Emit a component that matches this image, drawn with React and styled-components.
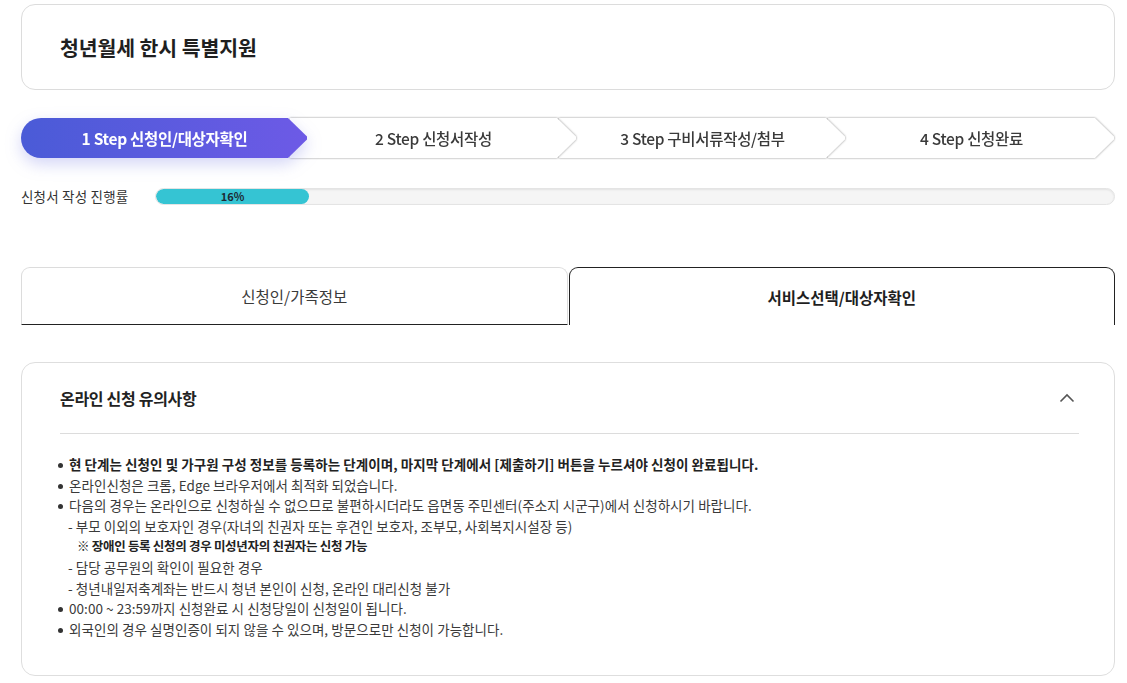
import React from 'react'
import styled, { createGlobalStyle } from 'styled-components'

const GlobalStyle = createGlobalStyle`
  html, body {
    margin: 0;
    padding: 0;
    background: #ffffff;
  }
  body {
    font-family: "Noto Sans CJK KR", "Noto Sans", sans-serif;
    color: #333;
  }
  * { box-sizing: border-box; }
`

const Page = styled.div`
  width: 1127px;
  padding: 4px 12px 0 21px;
`

const TitleCard = styled.div`
  height: 86px;
  border: 1px solid #dcdcdc;
  border-radius: 14px;
  display: flex;
  align-items: center;
  padding-left: 38px;

  h1 {
    margin: 0;
    font-size: 20.5px;
    font-weight: 700;
    color: #1f1f1f;
    letter-spacing: -0.1px;
  }
`

const StepList = styled.ol`
  display: flex;
  margin: 28px 0 0;
  padding: 0;
  list-style: none;
`

const StepItem = styled.li`
  flex: 1;
  margin-left: -18px;
  position: relative;
  z-index: ${p => p.$z};
  filter: ${p => p.$active
    ? 'drop-shadow(0 6px 8px rgba(86, 92, 220, 0.26))'
    : 'drop-shadow(0 0 0.8px rgba(0, 0, 0, 0.45))'};

  &:first-child { margin-left: 0; }
`

const StepShape = styled.div`
  height: 40px;
  display: flex;
  align-items: center;
  justify-content: center;
  font-size: 15.5px;
  letter-spacing: -0.3px;
  font-weight: ${p => p.$active ? 700 : 500};
  color: ${p => p.$active ? '#ffffff' : '#3a3a3a'};
  background: ${p => p.$active ? 'linear-gradient(90deg, #4a5bd7 0%, #6d5ae6 100%)' : '#ffffff'};
  border-radius: ${p => p.$first ? '20px 0 0 20px' : '0'};
  clip-path: polygon(0 0, calc(100% - 20px) 0, calc(100% - 1px) 46%, calc(100% - 1px) 54%, calc(100% - 20px) 100%, 0 100%);
`

const ProgressRow = styled.div`
  display: flex;
  align-items: center;
  margin-top: 28px;
`

const ProgressLabel = styled.span`
  width: 134px;
  font-size: 13.5px;
  color: #333;
  letter-spacing: 0.2px;
`

const Track = styled.div`
  flex: 1;
  height: 17px;
  border-radius: 9px;
  background: #f5f5f5;
  border: 1px solid #e4e4e4;
  box-shadow: inset 0 1px 2px rgba(0, 0, 0, 0.08);
  overflow: hidden;
`

const Fill = styled.div`
  height: 100%;
  border-radius: 9px;
  background: #35c4d3;
  display: flex;
  align-items: center;
  justify-content: center;
  font-size: 11px;
  font-weight: 700;
  color: #1d2a33;
`

const TabRow = styled.div`
  display: flex;
  gap: 1px;
  margin-top: 61px;
`

const Tab = styled.div`
  flex: 1;
  height: 58px;
  display: flex;
  align-items: center;
  justify-content: center;
  font-size: 15.5px;
  letter-spacing: 0;
  border-radius: 9px 9px 0 0;
  border: 1px solid ${p => p.$active ? '#222' : '#dcdcdc'};
  border-bottom: ${p => p.$active ? 'none' : '1px solid #222'};
  font-weight: ${p => p.$active ? 700 : 400};
  color: ${p => p.$active ? '#1f1f1f' : '#3a3a3a'};
`

const NoticeCard = styled.section`
  margin-top: 37px;
  border: 1px solid #dedede;
  border-radius: 14px;
  padding: 0 35px 36px 38px;
`

const NoticeHeader = styled.div`
  height: 71px;
  display: flex;
  align-items: center;
  justify-content: space-between;
  border-bottom: 1px solid #dcdcdc;

  h2 {
    margin: 0;
    font-size: 16px;
    font-weight: 700;
    color: #222;
    letter-spacing: -0.3px;
  }

  svg { margin-right: 4px; }
`

const NoticeList = styled.ul`
  margin: 0;
  padding: 20px 0 0;
  list-style: none;
  line-height: 20.6px;
  color: #3a3a3a;
`

const Item = styled.li`
  padding-left: ${p => p.$sub ? '8px' : p.$note ? '17px' : '9px'};
  font-weight: ${p => p.$strong ? 700 : 400};
  color: ${p => p.$strong ? '#222' : '#3a3a3a'};
  font-size: ${p => p.$note ? '12.5px' : '13.5px'};
  letter-spacing: ${p => p.$note ? '-0.3px' : '0.05px'};

  &::before {
    content: ${p => p.$sub || p.$note ? 'none' : "''"};
    display: inline-block;
    width: 5px;
    height: 5px;
    border-radius: 50%;
    background: #333;
    margin-left: -11px;
    margin-right: 6px;
    vertical-align: 2px;
  }
`

const ChevronUp = () => (
  <svg width="16" height="10" viewBox="0 0 16 10" fill="none">
    <path d="M1.5 8.5 L8 2 L14.5 8.5" stroke="#555" strokeWidth="1.6" />
  </svg>
)

const steps = [
  '1 Step 신청인/대상자확인',
  '2 Step 신청서작성',
  '3 Step 구비서류작성/첨부',
  '4 Step 신청완료',
]

const App = () => {
  const progress = 16
  return (
    <Page>
      <GlobalStyle />
      <TitleCard>
        <h1>청년월세 한시 특별지원</h1>
      </TitleCard>

      <StepList>
        {steps.map((s, i) => (
          <StepItem key={s} $z={10 - i} $active={i === 0}>
            <StepShape $active={i === 0} $first={i === 0}>{s}</StepShape>
          </StepItem>
        ))}
      </StepList>

      <ProgressRow>
        <ProgressLabel>신청서 작성 진행률</ProgressLabel>
        <Track>
          <Fill style={{ width: `${progress}%` }}>{progress}%</Fill>
        </Track>
      </ProgressRow>

      <TabRow>
        <Tab>신청인/가족정보</Tab>
        <Tab $active>서비스선택/대상자확인</Tab>
      </TabRow>

      <NoticeCard>
        <NoticeHeader>
          <h2>온라인 신청 유의사항</h2>
          <ChevronUp />
        </NoticeHeader>
        <NoticeList>
          <Item $strong>현 단계는 신청인 및 가구원 구성 정보를 등록하는 단계이며, 마지막 단계에서 [제출하기] 버튼을 누르셔야 신청이 완료됩니다.</Item>
          <Item>온라인신청은 크롬, Edge 브라우저에서 최적화 되었습니다.</Item>
          <Item>다음의 경우는 온라인으로 신청하실 수 없으므로 불편하시더라도 읍면동 주민센터(주소지 시군구)에서 신청하시기 바랍니다.</Item>
          <Item $sub>- 부모 이외의 보호자인 경우(자녀의 친권자 또는 후견인 보호자, 조부모, 사회복지시설장 등)</Item>
          <Item $note $strong>※ 장애인 등록 신청의 경우 미성년자의 친권자는 신청 가능</Item>
          <Item $sub>- 담당 공무원의 확인이 필요한 경우</Item>
          <Item $sub>- 청년내일저축계좌는 반드시 청년 본인이 신청, 온라인 대리신청 불가</Item>
          <Item>00:00 ~ 23:59까지 신청완료 시 신청당일이 신청일이 됩니다.</Item>
          <Item>외국인의 경우 실명인증이 되지 않을 수 있으며, 방문으로만 신청이 가능합니다.</Item>
        </NoticeList>
      </NoticeCard>
    </Page>
  )
}

export default App
